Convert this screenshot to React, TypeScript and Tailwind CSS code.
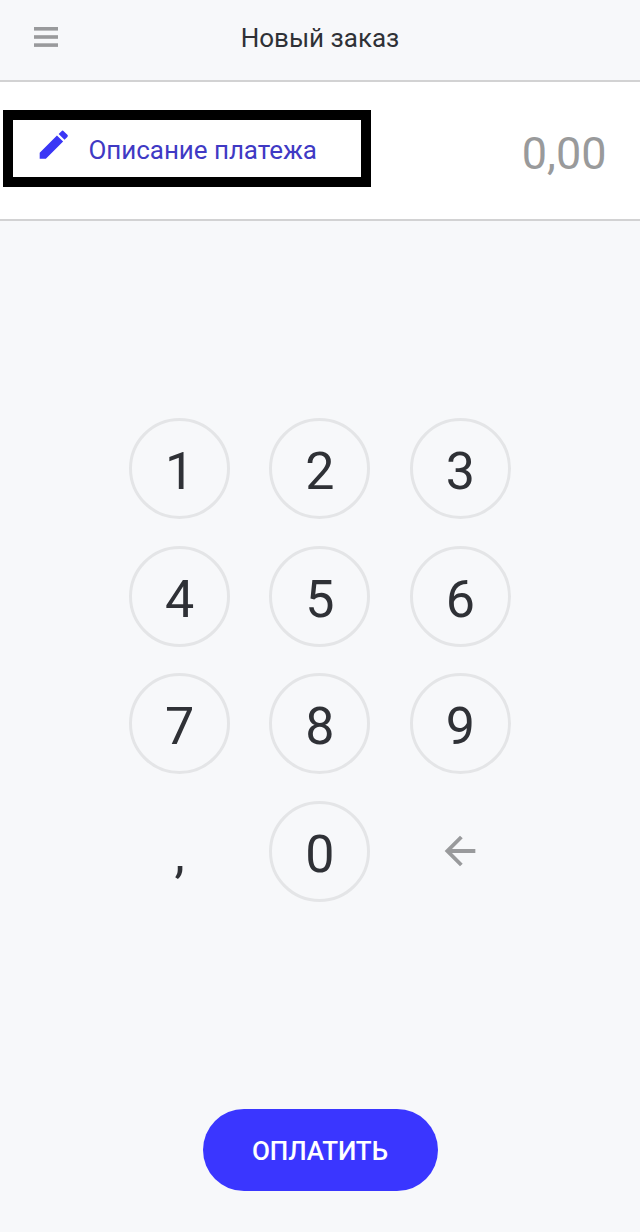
import React, { useState } from 'react';

const KEYS = ['1', '2', '3', '4', '5', '6', '7', '8', '9', ',', '0'];

function MenuIcon() {
  return (
    <svg width="24" height="20" viewBox="0 0 24 20" fill="#999a9c">
      <rect y="0" width="24" height="3.6" />
      <rect y="8.2" width="24" height="3.6" />
      <rect y="16.3" width="24" height="3.6" />
    </svg>
  );
}

function PencilIcon() {
  return (
    <svg width="37.5" height="37.5" viewBox="0 0 24 24" fill="#3a36f5">
      <path d="M3 17.1V21h3.95L18 9.95l-3.95-3.95L3 17.1zM20.71 7.04a.996.996 0 0 0 0-1.41l-2.34-2.34a.996.996 0 0 0-1.41 0l-1.83 1.83 3.75 3.75 1.83-1.83z" />
    </svg>
  );
}

function BackIcon() {
  return (
    <svg width="46" height="46" viewBox="0 0 24 24" fill="#999a9c">
      <path d="M20 11H7.83l5.59-5.59L12 4l-8 8 8 8 1.41-1.41L7.83 13H20v-2z" />
    </svg>
  );
}

export default function App() {
  const [digits, setDigits] = useState('');

  const amount = (Number(digits || '0') / 100).toFixed(2).replace('.', ',');

  const handleKey = (key: string) => {
    if (key === ',') return;
    setDigits((prev) => (prev + key).slice(0, 7));
  };

  return (
    <div className="flex h-[1232px] w-[640px] flex-col overflow-hidden bg-[#f7f8fa] font-['Roboto',sans-serif] text-[#2f3136]">
      {/* Header */}
      <header className="grid h-[82px] shrink-0 grid-cols-[1fr_auto_1fr] items-start border-b-2 border-[#d2d2d3]">
        <button type="button" aria-label="Меню" className="ml-[34px] mt-[27px] w-6">
          <MenuIcon />
        </button>
        <h1 className="mt-[22px] text-[26px] leading-8">Новый заказ</h1>
      </header>

      {/* Description and amount */}
      <section className="flex h-[139px] shrink-0 items-start justify-between border-b-2 border-[#d2d2d3] bg-white pl-[3px] pr-[33.5px] pt-7">
        <button
          type="button"
          className="flex h-[77px] w-[368px] items-start border-[10px] border-black pl-[22px] text-[#4039c4]"
        >
          <span className="mt-[6px]">
            <PencilIcon />
          </span>
          <span className="ml-4 mt-[14px] text-[26px] leading-8 tracking-[-0.05px]">Описание платежа</span>
        </button>
        <span className="mt-[18px] text-[45px] leading-[52px] text-[#999a9b]">{amount}</span>
      </section>

      {/* Keypad */}
      <div className="ml-[129px] mt-[197px] grid grid-cols-[repeat(3,101px)] gap-x-[39.4px] gap-y-[26.5px]">
        {KEYS.map((key) => (
          <button
            key={key}
            type="button"
            onClick={() => handleKey(key)}
            className={`flex size-[101px] items-center justify-center rounded-full pt-[7px] text-[52px] leading-none ${
              key === ',' ? '' : 'border-[3px] border-[#e4e5e7]'
            }`}
          >
            {key}
          </button>
        ))}
        <button
          type="button"
          aria-label="Удалить"
          onClick={() => setDigits((prev) => prev.slice(0, -1))}
          className="flex size-[101px] items-center justify-center pr-px"
        >
          <BackIcon />
        </button>
      </div>

      <button
        type="button"
        className="mx-auto mb-[41px] mt-auto h-[82px] w-[235px] rounded-full bg-[#3a36ff] pt-[3px] text-[26px] font-medium tracking-[-0.1px] text-white"
      >
        ОПЛАТИТЬ
      </button>
    </div>
  );
}
